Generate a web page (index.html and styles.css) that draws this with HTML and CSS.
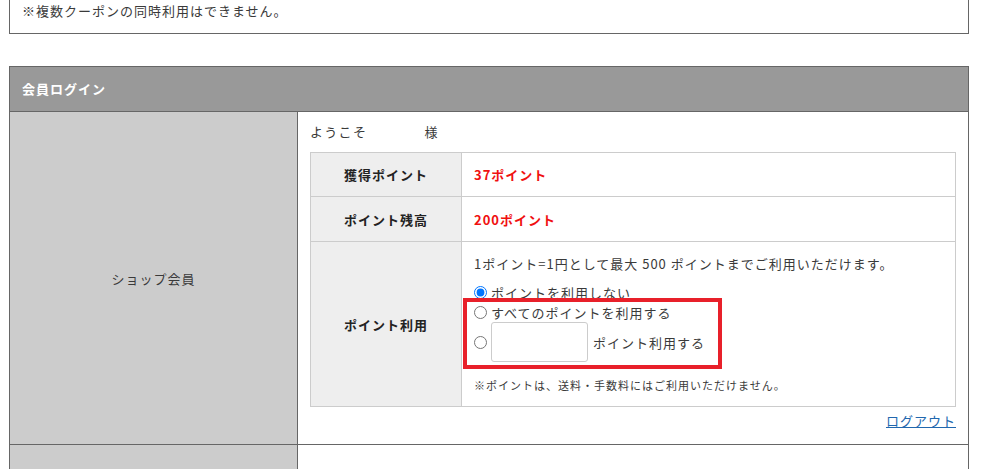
FILE: index.html
```html
<!DOCTYPE html>
<html lang="ja">
<head>
    <meta charset="UTF-8">
    <meta name="viewport" content="width=device-width, initial-scale=1.0">
    <title>会員ログイン</title>
    <link rel="stylesheet" href="styles.css">
</head>
<body>
    <div class="page">
        <div class="coupon-box">
            ※複数クーポンの同時利用はできません。
        </div>

        <div class="section">
            <div class="section-title">会員ログイン</div>

            <div class="row">
                <div class="row-label">ショップ会員</div>
                <div class="row-body">
                    <p class="welcome">ようこそ　　　　様</p>

                    <table class="points">
                        <tr class="r1">
                            <th>獲得ポイント</th>
                            <td class="red">37ポイント</td>
                        </tr>
                        <tr class="r2">
                            <th>ポイント残高</th>
                            <td class="red">200ポイント</td>
                        </tr>
                        <tr>
                            <th>ポイント利用</th>
                            <td class="use-cell">
                                <p class="info">1ポイント=1円として最大 500 ポイントまでご利用いただけます。</p>
                                <label class="option">
                                    <input type="radio" name="use" checked>
                                    <span>ポイントを利用しない</span>
                                </label>
                                <label class="option">
                                    <input type="radio" name="use">
                                    <span>すべてのポイントを利用する</span>
                                </label>
                                <label class="option option-input">
                                    <input type="radio" name="use">
                                    <input type="text" class="point-input">
                                    <span>ポイント利用する</span>
                                </label>
                                <p class="note">※ポイントは、送料・手数料にはご利用いただけません。</p>
                                <div class="highlight"></div>
                            </td>
                        </tr>
                    </table>

                    <div class="logout"><a href="#">ログアウト</a></div>
                </div>
            </div>

            <div class="row row-next">
                <div class="row-label"></div>
                <div class="row-body"></div>
            </div>
        </div>
    </div>
</body>
</html>
```

FILE: styles.css
```css
body {
    margin: 0;
    padding: 0;
    font-family: "Noto Sans CJK JP", "Noto Sans", sans-serif;
    font-size: 13px;
    color: #3a3a3a;
    background-color: white;
    overflow: hidden;
}

.page {
    width: 960px;
    margin-left: 9px;
}

.coupon-box {
    border: 1px solid #666;
    margin-top: -20px;
    padding: 20px 12px 12px;
    line-height: 20px;
    letter-spacing: 1px;
}

.section {
    margin-top: 32px;
    border: 1px solid #666;
    border-bottom: none;
}

.section-title {
    background-color: #999;
    color: white;
    font-weight: bold;
    height: 44px;
    line-height: 44px;
    padding-left: 12px;
    letter-spacing: 1px;
    border-bottom: 1px solid #666;
}

.row {
    display: flex;
}

.row-label {
    width: 287px;
    background-color: #ccc;
    border-right: 1px solid #666;
    display: flex;
    align-items: center;
    justify-content: center;
    letter-spacing: 1px;
}

.row-body {
    flex: 1;
    padding: 10px 12px 13px 12px;
}

.welcome {
    margin: 0 0 10px;
    line-height: 20px;
    letter-spacing: 1.3px;
}

.points {
    width: 100%;
    border-collapse: collapse;
}

    .points th,
    .points td {
        border: 1px solid #ccc;
        letter-spacing: 1px;
        padding: 0 12px;
        text-align: left;
    }

    .points th {
        width: 126px;
        background-color: #eee;
        text-align: center;
        color: #222;
        font-weight: bold;
    }

    .points .r1 th,
    .points .r1 td {
        height: 43px;
    }

    .points .r2 th,
    .points .r2 td {
        height: 44px;
    }

    .points .red {
        color: #f01010;
        font-weight: bold;
    }

.use-cell {
    position: relative;
    padding: 12px 12px 13px !important;
}

.info {
    margin: 0 0 8px;
    line-height: 20px;
}

.option {
    display: flex;
    align-items: center;
    height: 20px;
}

    .option input[type="radio"] {
        width: 13px;
        height: 13px;
        margin: 0 4px 0 0;
    }

.option-input {
    height: 40px;
}

.point-input {
    width: 97px;
    height: 40px;
    box-sizing: border-box;
    border: 1px solid #ccc;
    border-radius: 3px;
    margin: 0 5px 0 0;
    padding: 0 6px;
    font-size: 13px;
}

.note {
    margin: 15px 0 0;
    font-size: 11px;
    line-height: 16px;
}

.highlight {
    position: absolute;
    left: 1px;
    top: 56px;
    width: 251px;
    height: 63px;
    border: 4px solid #e8202a;
}

.logout {
    text-align: right;
    margin-top: 4px;
    line-height: 20px;
    letter-spacing: 1px;
}

    .logout a {
        color: #2167ae;
        text-decoration: underline;
    }

.row-next {
    border-top: 1px solid #666;
    height: 60px;
}
```
